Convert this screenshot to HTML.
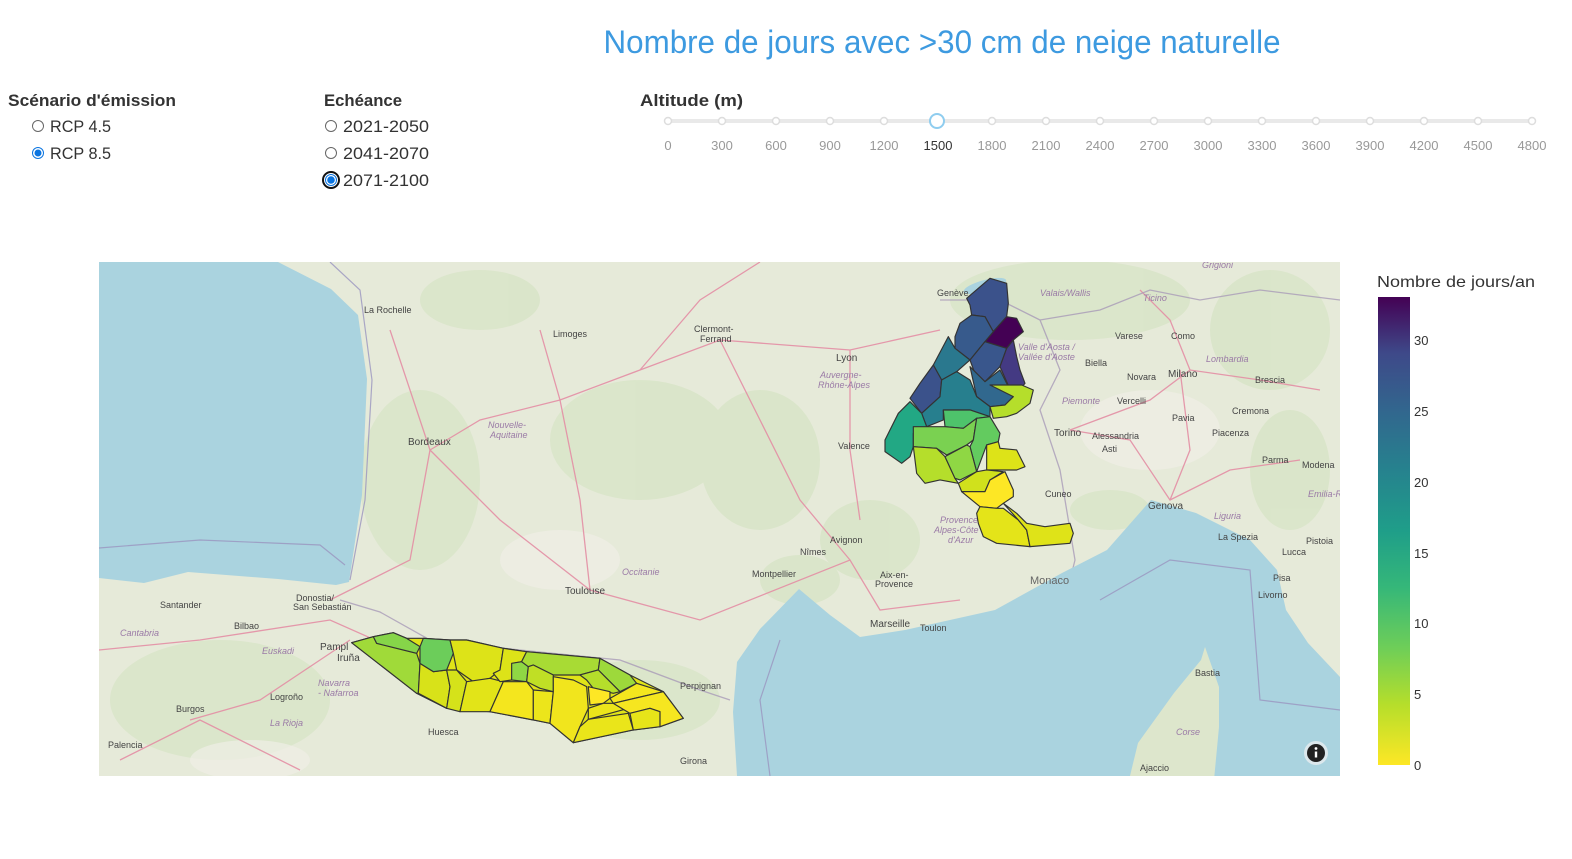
<!DOCTYPE html>
<html><head><meta charset="utf-8"><style>
html,body{margin:0;padding:0;background:#fff;width:1572px;height:859px;overflow:hidden}
svg{display:block;font-family:"Liberation Sans",sans-serif}
</style></head><body>
<svg width="1572" height="859" viewBox="0 0 1572 859" xmlns="http://www.w3.org/2000/svg">
<defs>
<linearGradient id="vir" x1="0" y1="1" x2="0" y2="0">
<stop offset="0" stop-color="#fde725"/><stop offset="0.13" stop-color="#b5de2b"/><stop offset="0.25" stop-color="#6ece58"/><stop offset="0.38" stop-color="#35b779"/><stop offset="0.5" stop-color="#1f9e89"/><stop offset="0.63" stop-color="#26828e"/><stop offset="0.75" stop-color="#31688e"/><stop offset="0.88" stop-color="#3e4989"/><stop offset="1" stop-color="#440154"/>
</linearGradient>
<clipPath id="mc"><rect x="99" y="262" width="1241" height="514"/></clipPath>
</defs>

<text x="942" y="53" text-anchor="middle" font-size="32" fill="#3d9ae0" textLength="677" lengthAdjust="spacingAndGlyphs">Nombre de jours avec &gt;30 cm de neige naturelle</text>

<g font-weight="bold" font-size="17" fill="#333">
<text x="8" y="106" textLength="168" lengthAdjust="spacingAndGlyphs">Scénario d'émission</text>
<text x="324" y="106" textLength="78" lengthAdjust="spacingAndGlyphs">Echéance</text>
<text x="640" y="106" textLength="103" lengthAdjust="spacingAndGlyphs">Altitude (m)</text>
</g>
<g font-size="17" fill="#333">
<circle cx="38" cy="126" r="5.5" fill="#fff" stroke="#666"/>
<text x="50" y="132" textLength="61" lengthAdjust="spacingAndGlyphs">RCP 4.5</text>
<circle cx="38" cy="153" r="5.5" fill="#fff" stroke="#0a74e0"/><circle cx="38" cy="153" r="3.5" fill="#0a74e0"/>
<text x="50" y="159" textLength="61" lengthAdjust="spacingAndGlyphs">RCP 8.5</text>
<circle cx="331" cy="126" r="5.5" fill="#fff" stroke="#666"/>
<text x="343" y="132" textLength="86" lengthAdjust="spacingAndGlyphs">2021-2050</text>
<circle cx="331" cy="153" r="5.5" fill="#fff" stroke="#666"/>
<text x="343" y="159" textLength="86" lengthAdjust="spacingAndGlyphs">2041-2070</text>
<circle cx="331" cy="180" r="8" fill="#fff" stroke="#111" stroke-width="2"/><circle cx="331" cy="180" r="5.5" fill="#fff" stroke="#0a74e0"/><circle cx="331" cy="180" r="3.8" fill="#0a74e0"/>
<text x="343" y="186" textLength="86" lengthAdjust="spacingAndGlyphs">2071-2100</text>
</g>

<rect x="666" y="119" width="868" height="4" rx="2" fill="#e9e9e9"/>
<g fill="#fff" stroke="#ddd" stroke-width="1.5">
<circle cx="668" cy="121" r="3.5"/><circle cx="722" cy="121" r="3.5"/><circle cx="776" cy="121" r="3.5"/><circle cx="830" cy="121" r="3.5"/><circle cx="884" cy="121" r="3.5"/><circle cx="992" cy="121" r="3.5"/><circle cx="1046" cy="121" r="3.5"/><circle cx="1100" cy="121" r="3.5"/><circle cx="1154" cy="121" r="3.5"/><circle cx="1208" cy="121" r="3.5"/><circle cx="1262" cy="121" r="3.5"/><circle cx="1316" cy="121" r="3.5"/><circle cx="1370" cy="121" r="3.5"/><circle cx="1424" cy="121" r="3.5"/><circle cx="1478" cy="121" r="3.5"/><circle cx="1532" cy="121" r="3.5"/>
</g>
<circle cx="937" cy="121" r="7" fill="#fff" stroke="#8fcdef" stroke-width="2"/>
<g font-size="13" fill="#999" text-anchor="middle">
<text x="668" y="150">0</text><text x="722" y="150">300</text><text x="776" y="150">600</text><text x="830" y="150">900</text><text x="884" y="150">1200</text><text x="938" y="150" fill="#333">1500</text><text x="992" y="150">1800</text><text x="1046" y="150">2100</text><text x="1100" y="150">2400</text><text x="1154" y="150">2700</text><text x="1208" y="150">3000</text><text x="1262" y="150">3300</text><text x="1316" y="150">3600</text><text x="1370" y="150">3900</text><text x="1424" y="150">4200</text><text x="1478" y="150">4500</text><text x="1532" y="150">4800</text>
</g>

<g clip-path="url(#mc)">
<rect x="99" y="262" width="1241" height="514" fill="#e6ead9"/>
<g fill="#d6e4c4" opacity="0.7">
<ellipse cx="420" cy="480" rx="60" ry="90"/><ellipse cx="640" cy="440" rx="90" ry="60"/><ellipse cx="760" cy="460" rx="60" ry="70"/><ellipse cx="220" cy="700" rx="110" ry="60"/><ellipse cx="870" cy="540" rx="50" ry="40"/><ellipse cx="1070" cy="300" rx="120" ry="40"/><ellipse cx="1270" cy="330" rx="60" ry="60"/><ellipse cx="1290" cy="470" rx="40" ry="60"/><ellipse cx="640" cy="700" rx="80" ry="40"/><ellipse cx="480" cy="300" rx="60" ry="30"/><ellipse cx="1110" cy="510" rx="40" ry="20"/><ellipse cx="800" cy="580" rx="40" ry="25"/>
</g>
<g fill="#efeee6" opacity="0.7">
<ellipse cx="1150" cy="430" rx="70" ry="40"/><ellipse cx="560" cy="560" rx="60" ry="30"/><ellipse cx="250" cy="760" rx="60" ry="20"/>
</g>
<g fill="none" stroke="#e48fa5" stroke-width="1.3" opacity="0.9">
<path d="M430 450 L480 420 L560 400 L640 370 L720 340 L850 350 L940 330"/>
<path d="M430 450 L500 520 L590 590 L700 620 L850 560 L880 610 L960 600"/>
<path d="M590 590 L580 500 L560 400 L540 330"/>
<path d="M720 340 L760 420 L800 500 L850 560"/>
<path d="M850 350 L850 450 L860 520"/>
<path d="M1070 430 L1150 400 L1190 370 L1260 380 L1320 390"/>
<path d="M1070 430 L1130 440 L1170 500 L1230 470 L1300 460"/>
<path d="M1190 370 L1170 320 L1140 290"/>
<path d="M99 650 L200 640 L330 620 L420 660 L520 700"/>
<path d="M190 720 L260 700 L350 640"/>
<path d="M390 330 L430 450 L410 560 L330 600"/>
<path d="M120 760 L200 720 L300 770"/>
<path d="M640 370 L700 300 L760 262"/>
<path d="M1180 370 L1190 450 L1170 500"/>
</g>
<g fill="none" stroke="#a99bb8" stroke-width="1.3" opacity="0.8">
<path d="M340 600 L380 612 L430 640 L520 650 L620 660 L700 690 L730 700"/>
<path d="M940 300 L1000 300 L1040 320 L1060 370 L1040 410 L1060 470 L1075 560 L1070 580"/>
<path d="M1040 320 L1100 310 L1150 290 L1200 300 L1260 290 L1340 300"/>
</g>
<g fill="#aad3df">
<path d="M99 262 L278 262 L331 289 L358 315 L367 379 L362 495 L349 582 L336 585 L278 579 L188 572 L144 583 L99 578 Z"/>
<path d="M799 589 L760 629 L737 662 L733 712 L737 776 L1340 776 L1340 677 L1308 643 L1286 610 L1277 570 L1250 540 L1196 513 L1151 500 L1107 550 L1062 573 L995 610 L905 630 L860 637 L830 615 Z"/>
<ellipse cx="985" cy="286" rx="22" ry="6" transform="rotate(-15 985 286)"/>
</g>
<g fill="none" stroke="#9a95bf" stroke-width="1.2" opacity="0.8">
<path d="M99 548 L200 540 L320 545 L345 565"/>
<path d="M330 262 L360 290 L372 380 L365 500 L350 580"/>
<path d="M780 640 L760 700 L770 776"/>
<path d="M1100 600 L1170 560 L1250 570 L1260 700 L1340 710"/>
</g>
<path d="M1205 647 L1219 687 L1219 727 L1214 780 L1129 780 L1138 743 L1174 693 L1201 660 Z" fill="#dde6cc"/>

<g font-size="9" fill="#444">
<text x="364" y="313">La Rochelle</text><text x="553" y="337">Limoges</text><text x="694" y="332">Clermont-</text><text x="700" y="342">Ferrand</text>
<text x="836" y="361" font-size="10">Lyon</text><text x="408" y="445" font-size="10">Bordeaux</text><text x="565" y="594" font-size="10">Toulouse</text>
<text x="937" y="296">Genève</text><text x="838" y="449">Valence</text><text x="800" y="555">Nîmes</text><text x="830" y="543">Avignon</text><text x="752" y="577">Montpellier</text>
<text x="880" y="578">Aix-en-</text><text x="875" y="587">Provence</text><text x="870" y="627" font-size="10">Marseille</text><text x="920" y="631">Toulon</text>
<text x="1030" y="584" font-size="11" fill="#666">Monaco</text><text x="1054" y="436" font-size="10">Torino</text><text x="1045" y="497">Cuneo</text><text x="1148" y="509" font-size="10">Genova</text>
<text x="1168" y="377" font-size="10">Milano</text><text x="1127" y="380">Novara</text><text x="1115" y="339">Varese</text><text x="1171" y="339">Como</text><text x="1085" y="366">Biella</text><text x="1117" y="404">Vercelli</text><text x="1092" y="439">Alessandria</text><text x="1102" y="452">Asti</text><text x="1172" y="421">Pavia</text><text x="1232" y="414">Cremona</text><text x="1212" y="436">Piacenza</text><text x="1255" y="383">Brescia</text><text x="1262" y="463">Parma</text><text x="1302" y="468">Modena</text>
<text x="1218" y="540">La Spezia</text><text x="1306" y="544">Pistoia</text><text x="1282" y="555">Lucca</text><text x="1273" y="581">Pisa</text><text x="1258" y="598">Livorno</text><text x="1195" y="676">Bastia</text><text x="1140" y="771">Ajaccio</text>
<text x="296" y="601">Donostia/</text><text x="293" y="610">San Sebastián</text><text x="160" y="608">Santander</text><text x="234" y="629">Bilbao</text><text x="320" y="650" font-size="10">Pampl</text><text x="337" y="661" font-size="10">Iruña</text>
<text x="270" y="700">Logroño</text><text x="176" y="712">Burgos</text><text x="108" y="748">Palencia</text><text x="428" y="735">Huesca</text><text x="680" y="689">Perpignan</text><text x="680" y="764">Girona</text>
</g>
<g font-size="9" fill="#9a7aa6" font-style="italic">
<text x="488" y="428">Nouvelle-</text><text x="490" y="438">Aquitaine</text><text x="622" y="575">Occitanie</text><text x="820" y="378">Auvergne-</text><text x="818" y="388">Rhône-Alpes</text>
<text x="940" y="523">Provence-</text><text x="934" y="533">Alpes-Côte</text><text x="948" y="543">d'Azur</text><text x="1040" y="296">Valais/Wallis</text><text x="1018" y="350">Valle d'Aosta /</text><text x="1018" y="360">Vallée d'Aoste</text>
<text x="1062" y="404">Piemonte</text><text x="1206" y="362">Lombardia</text><text x="1214" y="519">Liguria</text><text x="1176" y="735">Corse</text><text x="120" y="636">Cantabria</text><text x="262" y="654">Euskadi</text><text x="318" y="686">Navarra</text><text x="318" y="696">- Nafarroa</text><text x="270" y="726">La Rioja</text><text x="1308" y="497">Emilia-Ro</text><text x="1143" y="301">Ticino</text><text x="1202" y="268">Grigioni</text>
</g>

<g transform="translate(340,620) scale(0.3333)" stroke="#333" stroke-width="3.5" stroke-linejoin="round">
<path fill="#e0e318" d="M35 68 L100 50 L160 38 L200 55 L250 55 L330 60 L380 60 L490 85 L560 95 L780 115 L870 165 L970 215 L1030 295 L960 320 L880 330 L700 368 L630 310 L580 300 L450 275 L320 265 L230 220 Z"/>
<path fill="#a0da39" d="M35 68 L100 50 L110 70 L230 100 L240 130 L235 220 L230 220 Z"/>
<path fill="#86d549" d="M100 50 L160 38 L200 55 L240 80 L230 100 L110 70 Z"/>
<path fill="#d8e219" d="M235 220 L240 130 L280 155 L320 150 L330 200 L320 265 Z"/>
<path fill="#6ccd5a" d="M240 80 L250 55 L330 60 L340 100 L320 150 L280 155 L240 130 Z"/>
<path fill="#dde318" d="M330 60 L380 60 L490 85 L480 150 L450 175 L400 185 L350 150 L340 100 Z"/>
<path fill="#d5e21a" d="M320 150 L350 150 L380 185 L360 275 L320 265 L330 200 Z"/>
<path fill="#e2e418" d="M380 185 L450 175 L490 185 L450 275 L360 275 Z"/>
<path fill="#dde318" d="M490 85 L560 95 L545 125 L520 130 L515 180 L480 185 L460 160 L480 150 Z"/>
<path fill="#8fd744" d="M515 130 L545 125 L565 140 L560 185 L515 180 Z"/>
<path fill="#a8db34" d="M560 95 L780 115 L775 150 L720 165 L640 165 L580 135 L565 140 L545 125 Z"/>
<path fill="#c0df25" d="M565 140 L580 135 L640 165 L640 215 L600 205 L560 185 Z"/>
<path fill="#9dd93b" d="M780 115 L870 165 L890 190 L840 215 L775 150 Z"/>
<path fill="#b5de2b" d="M720 165 L775 150 L840 215 L820 220 L760 205 L740 180 Z"/>
<path fill="#f4e61e" d="M450 275 L490 185 L560 185 L580 210 L580 300 Z"/>
<path fill="#ece51b" d="M580 210 L640 215 L630 310 L580 300 Z"/>
<path fill="#f1e51d" d="M640 170 L700 180 L740 200 L745 265 L720 320 L700 368 L630 310 L640 215 Z"/>
<path fill="#fde725" d="M745 200 L810 215 L810 235 L790 250 L750 255 Z"/>
<path fill="#f4e61e" d="M810 235 L890 190 L970 215 L820 250 Z"/>
<path fill="#ece51b" d="M745 265 L790 250 L850 250 L865 265 L745 298 Z"/>
<path fill="#f6e620" d="M820 250 L970 215 L1030 295 L960 320 L960 275 L930 265 L870 280 Z"/>
<path fill="#eae51a" d="M745 298 L865 280 L880 330 L700 368 L720 320 Z"/>
<path fill="#e7e419" d="M870 280 L930 265 L960 275 L960 320 L880 330 Z"/>
</g>

<g transform="translate(870,270) scale(0.3333)" stroke="#333" stroke-width="3.5" stroke-linejoin="round">
<path fill="#3b528b" d="M290 85 L360 25 L410 40 L415 100 L410 140 L370 185 L345 140 L305 135 L300 105 Z"/>
<path fill="#440154" d="M370 185 L410 140 L440 145 L460 185 L430 210 L410 235 L345 215 Z"/>
<path fill="#375a8c" d="M255 200 L270 160 L305 135 L345 140 L370 185 L345 215 L300 270 L255 235 Z"/>
<path fill="#39568c" d="M300 270 L345 215 L410 235 L390 290 L345 335 L320 325 Z"/>
<path fill="#443a83" d="M410 235 L430 210 L440 260 L450 300 L465 340 L430 380 L390 290 Z"/>
<path fill="#31688e" d="M300 290 L345 335 L390 300 L430 380 L405 405 L360 410 L320 380 Z"/>
<path fill="#2a788e" d="M190 285 L235 200 L255 235 L300 270 L260 305 L215 330 Z"/>
<path fill="#3b528b" d="M120 385 L150 340 L190 285 L215 330 L210 380 L155 430 Z"/>
<path fill="#277f8e" d="M155 430 L210 380 L215 330 L260 305 L300 330 L320 380 L360 410 L360 440 L300 420 L220 420 L220 450 L170 470 Z"/>
<path fill="#22a884" d="M45 510 L85 430 L120 395 L155 430 L170 470 L130 490 L130 530 L120 560 L95 580 L45 545 Z"/>
<path fill="#4ec36b" d="M220 420 L300 420 L360 440 L320 445 L280 475 L225 470 Z"/>
<path fill="#7ad151" d="M130 470 L170 470 L225 470 L280 475 L320 445 L310 510 L290 525 L230 555 L200 535 L130 530 Z"/>
<path fill="#63cb5f" d="M320 445 L360 440 L390 490 L385 515 L350 525 L320 605 L300 530 L310 510 Z"/>
<path fill="#b5de2b" d="M130 530 L200 535 L225 560 L255 625 L265 640 L210 630 L165 640 L140 610 Z"/>
<path fill="#8fd744" d="M225 560 L290 525 L300 530 L320 605 L270 630 L255 625 Z"/>
<path fill="#b5de2b" d="M360 345 L455 345 L490 360 L480 400 L440 430 L410 440 L370 445 L360 410 L405 405 L430 380 Z"/>
<path fill="#dde318" d="M350 525 L385 515 L390 535 L440 540 L465 590 L440 600 L350 600 Z"/>
<path fill="#d0e11c" d="M265 640 L320 605 L350 600 L400 605 L360 630 L345 665 L275 665 Z"/>
<path fill="#fde725" d="M275 665 L345 665 L360 630 L405 605 L430 660 L430 680 L400 700 L380 715 L330 710 Z"/>
<path fill="#e4e419" d="M320 730 L330 710 L380 715 L400 715 L445 750 L470 780 L480 830 L380 820 L340 800 L325 760 Z"/>
<path fill="#dfe318" d="M400 700 L440 730 L470 760 L525 770 L600 760 L610 790 L600 820 L480 830 L470 780 L445 750 Z"/>
</g>

<circle cx="1316" cy="753" r="12" fill="#e9eef0" opacity="0.8"/>
<circle cx="1316" cy="753" r="9" fill="#222"/>
<rect x="1314.8" y="751.5" width="2.4" height="6" fill="#fff"/><circle cx="1316" cy="748.5" r="1.4" fill="#fff"/>
</g>

<text x="1377" y="287" font-size="16" fill="#333" textLength="158" lengthAdjust="spacingAndGlyphs">Nombre de jours/an</text>
<rect x="1378" y="297" width="32" height="468" fill="url(#vir)"/>
<g font-size="13" fill="#333">
<text x="1414" y="345">30</text><text x="1414" y="416">25</text><text x="1414" y="487">20</text><text x="1414" y="558">15</text><text x="1414" y="628">10</text><text x="1414" y="699">5</text><text x="1414" y="770">0</text>
</g>
</svg>
</body></html>
